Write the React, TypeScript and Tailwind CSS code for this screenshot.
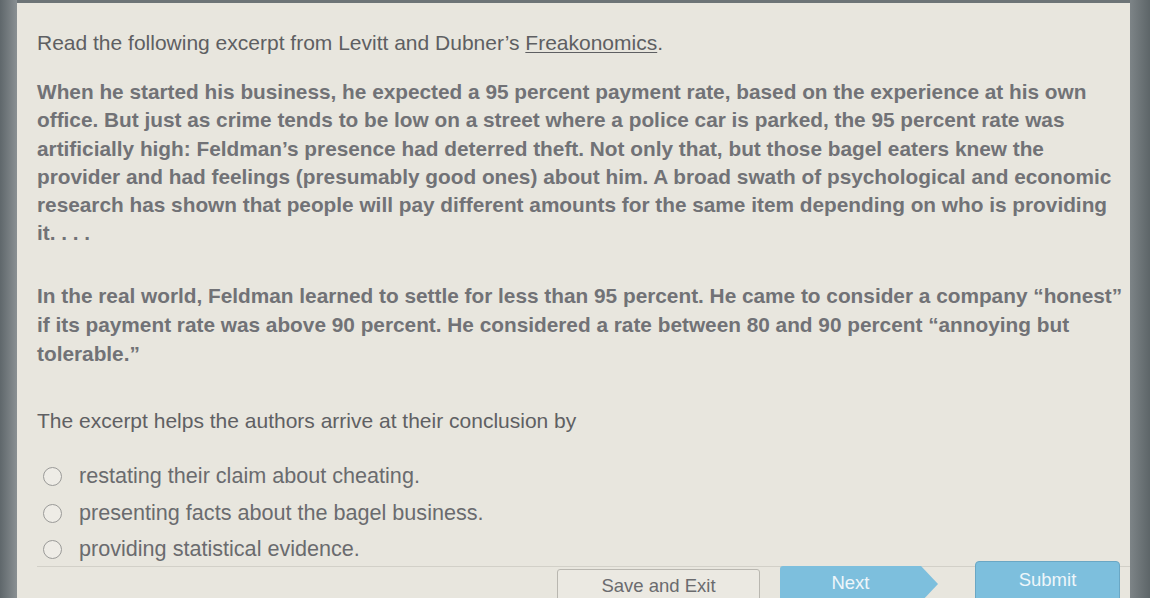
const bodyFont = { fontFamily: '"Liberation Sans", Arial, sans-serif' };

const para1 = [
  "When he started his business, he expected a 95 percent payment rate, based on the experience at his own",
  "office. But just as crime tends to be low on a street where a police car is parked, the 95 percent rate was",
  "artificially high: Feldman’s presence had deterred theft. Not only that, but those bagel eaters knew the",
  "provider and had feelings (presumably good ones) about him. A broad swath of psychological and economic",
  "research has shown that people will pay different amounts for the same item depending on who is providing",
  "it. . . .",
];

const para2 = [
  "In the real world, Feldman learned to settle for less than 95 percent. He came to consider a company “honest”",
  "if its payment rate was above 90 percent. He considered a rate between 80 and 90 percent “annoying but",
  "tolerable.”",
];

const options = [
  "restating their claim about cheating.",
  "presenting facts about the bagel business.",
  "providing statistical evidence.",
];

function Radio({ label }: { label: string }) {
  return (
    <label className="flex items-center h-[36.5px]">
      <span className="ml-[6px] h-[19px] w-[19px] rounded-full border-[1.5px] border-[#9a9a98] bg-[#eeece6]" />
      <span className="ml-[17px] text-[21.6px] text-[#6a6b6e]">{label}</span>
    </label>
  );
}

export default function App() {
  return (
    <div className="flex h-[598px] w-[1150px] overflow-hidden bg-[#6d7477]" style={bodyFont}>
      <div className="w-[17px] shrink-0 bg-gradient-to-r from-[#5f676b] to-[#8a9093]" />
      <div className="flex flex-1 flex-col pt-[3px]">
        <div className="flex h-[595px] flex-col bg-[#e8e6de] pl-[20px] pt-[26px]">
          <h1 className="h-[28px] text-[21px] leading-[28px] text-[#5e5f62] whitespace-nowrap">
            Read the following excerpt from Levitt and Dubner’s <span className="underline decoration-1 underline-offset-2">Freakonomics</span>.
          </h1>

          <div className="mt-[21px] text-[20.8px] font-bold leading-[28.3px] text-[#717276] whitespace-nowrap">
            {para1.map((l) => (
              <div key={l}>{l}</div>
            ))}
          </div>

          <div className="mt-[34.7px] text-[20.8px] font-bold leading-[28.6px] text-[#717276] whitespace-nowrap">
            {para2.map((l) => (
              <div key={l}>{l}</div>
            ))}
          </div>

          <p className="mt-[39px] text-[21px] leading-[28px] text-[#5f6063]">
            The excerpt helps the authors arrive at their conclusion by
          </p>

          <div className="mt-[23px] flex flex-col">
            {options.map((o) => (
              <Radio key={o} label={o} />
            ))}
          </div>

          <div className="-mt-[2px] border-t border-[#d2d0c8]" />

          <div className="flex items-start pl-[520px]">
            <button className="mt-[2px] h-[40px] w-[203px] rounded-[3px] border border-[#b9b7b0] bg-[#ebe9e2] pb-[6px] text-[18.5px] text-[#6a6b6e]">
              Save and Exit
            </button>
            <div className="ml-[20px] -mt-[1px] flex h-[36px] w-[158px] items-center">
              <div className="flex h-full flex-1 items-center justify-center rounded-l-[3px] bg-[#7dbfdd] pb-[2px] text-[18.5px] text-[#eef6fa]">
                <span className="ml-[4px]">Next</span>
              </div>
              <svg width="21" height="36" viewBox="0 0 21 36" className="block">
                <path d="M0 0 L4 0 L21 18 L4 36 L0 36 Z" fill="#7dbfdd" />
              </svg>
            </div>
            <button className="ml-[37px] -mt-[6px] h-[42px] w-[145px] rounded-[4px] border border-[#6aa7c4] bg-[#7dbfdd] pb-[4px] text-[18.5px] text-[#eef6fa]">
              Submit
            </button>
          </div>
        </div>
      </div>
      <div className="w-[20px] shrink-0 bg-gradient-to-r from-[#7d8487] to-[#5d6568]" />
    </div>
  );
}
